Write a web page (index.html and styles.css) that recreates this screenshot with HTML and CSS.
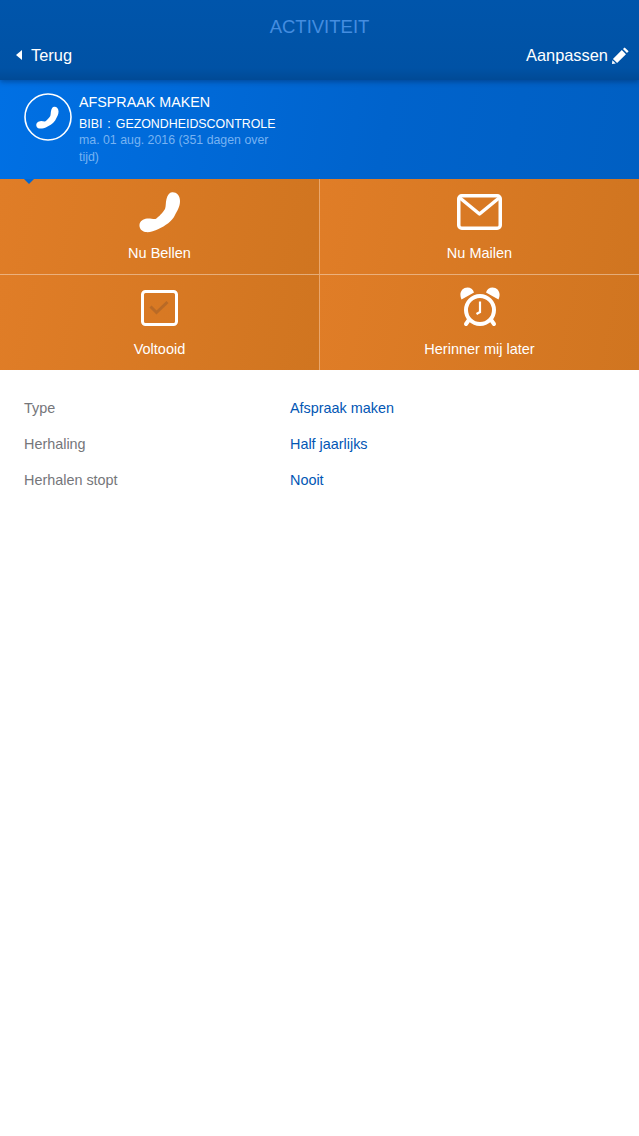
FILE: index.html
```html
<!DOCTYPE html>
<html lang="nl">
<head>
<meta charset="utf-8">
<title>Activiteit</title>
<link rel="stylesheet" href="styles.css">
</head>
<body>
<header class="nav">
  <h1 class="nav-title">ACTIVITEIT</h1>
  <div class="nav-row">
    <a class="nav-link"><svg class="back-icon" viewBox="0 0 6 10"><path d="M6 0V10L0 5Z"/></svg>Terug</a>
    <a class="nav-link">Aanpassen<svg class="edit-icon" viewBox="0 0 18 18"><path d="M13.400 .4 17.600 4.600 15.800 6.400 11.600 2.200ZM10.400 3.200 14.800 7.600 5.400 17 1 12.600ZM.4 14 4 17.600 0 18Z"/></svg></a>
  </div>
</header>
<section class="summary">
  <svg class="summary-icon" viewBox="0 0 48 48"><circle class="ring-thin" cx="24" cy="24" r="23"/><path class="fill" transform="translate(12 13) scale(.55)" d="M33 1.300C37 .8 41 4 41 10 41 16 38 20 36 24 33.500 30 26 35 19.500 38 15 40.500 10 41.500 6.500 41 2.500 40.500 0 37 .5 33.500 1 30 4 28 8 27.500 11 27 14.500 28.500 16.500 28 19.500 26 24 21.500 26 18 27 15 26.500 12 27.500 8 28.500 4 30.500 1.600 33 1.300Z"/></svg>
  <div class="summary-text">
    <div class="summary-title">AFSPRAAK MAKEN</div>
    <div class="summary-sub">BIBI : GEZONDHEIDSCONTROLE</div>
    <div class="summary-date">ma. 01 aug. 2016 (351 dagen over tijd)</div>
  </div>
</section>
<section class="actions">
  <div class="pointer"></div>
  <div class="action">
    <div class="action-art"><svg class="icon-phone" viewBox="0 0 42 42"><path class="fill" d="M33 1.300C37 .8 41 4 41 10 41 16 38 20 36 24 33.500 30 26 35 19.500 38 15 40.500 10 41.500 6.500 41 2.500 40.500 0 37 .5 33.500 1 30 4 28 8 27.500 11 27 14.500 28.500 16.500 28 19.500 26 24 21.500 26 18 27 15 26.500 12 27.500 8 28.500 4 30.500 1.600 33 1.300Z"/></svg></div>
    <span class="action-label">Nu Bellen</span>
  </div>
  <div class="action">
    <div class="action-art"><svg class="icon-mail" viewBox="0 0 45 36"><rect class="line" x="1.750" y="1.750" width="41.500" height="32.500" rx="3"/><path class="line" d="M3 4 22.500 20 42 4"/></svg></div>
    <span class="action-label">Nu Mailen</span>
  </div>
  <div class="action">
    <div class="action-art"><svg class="icon-check" viewBox="0 0 37 36"><rect class="line thin" x="1.500" y="1.500" width="34" height="33" rx="3"/><path class="check" d="M9.500 16.500 15.500 22.500 26.500 12"/></svg></div>
    <span class="action-label">Voltooid</span>
  </div>
  <div class="action">
    <div class="action-art"><svg class="icon-alarm" viewBox="0 0 42 42"><path class="fill" d="M2.500 12.500C-.5 6 3 .5 8.500 .5 11.500 .5 14 2 15 5.500ZM39.500 12.500C42.500 6 39 .5 33.500 .5 30.500 .5 28 2 27 5.500Z"/><circle class="line ring" cx="21" cy="23" r="14"/><path class="foot" d="M9.500 33.500 7 37M32.500 33.500 35 37"/><path class="hands" d="M21 14.500V25L17.500 27"/></svg></div>
    <span class="action-label">Herinner mij later</span>
  </div>
</section>
<dl class="details">
  <div class="detail"><dt>Type</dt><dd>Afspraak maken</dd></div>
  <div class="detail"><dt>Herhaling</dt><dd>Half jaarlijks</dd></div>
  <div class="detail"><dt>Herhalen stopt</dt><dd>Nooit</dd></div>
</dl>
</body>
</html>
```
FILE: styles.css
```css
* { box-sizing: border-box; }
html, body { margin: 0; padding: 0; }
body {
  width: 639px;
  min-height: 1136px;
  background: #fff;
  font-family: "Liberation Sans", Arial, sans-serif;
  overflow: hidden;
}
.nav {
  height: 80px;
  background: linear-gradient(180deg, #0055ab 0%, #0052a5 85%, #004a96 100%);
  padding-top: 16px;
  color: #fff;
  box-shadow: 0 2px 5px rgba(0, 40, 90, .45);
  position: relative;
  z-index: 1;
}
.nav-title {
  margin: 0;
  height: 22px;
  line-height: 22px;
  font-size: 18.500px;
  font-weight: 400;
  text-align: center;
  color: #448de0;
}
.nav-row {
  display: flex;
  justify-content: space-between;
  align-items: center;
  margin-top: 6px;
  padding: 0 10px 0 16px;
}
.nav-link {
  display: flex;
  align-items: center;
  font-size: 16.400px;
  line-height: 22px;
  color: #fff;
}
.back-icon { width: 6px; height: 10px; margin-right: 9px; fill: #fff; }
.edit-icon { width: 17px; height: 17px; margin-left: 4px; fill: #fff; }
.summary {
  height: 99px;
  background: linear-gradient(100deg, #0070e4 0%, #0063cc 60%, #005fc2 100%);
  padding: 13px 0 0 24px;
  display: flex;
  gap: 7px;
}
.summary-icon {
  width: 48px;
  height: 48px;
  flex: none;
  display: block;
}
.ring-thin { fill: none; stroke: #fff; stroke-width: 1.600; }
.fill { fill: #fff; }
.summary-text { width: 200px; color: #fff; }
.summary-title { font-size: 14.300px; line-height: 18px; }
.summary-sub { font-size: 12.400px; line-height: 16px; margin-top: 5px; white-space: nowrap; word-spacing: 1.500px; }
.summary-date { font-size: 12.350px; line-height: 17px; color: #77b3f2; }
.actions {
  position: relative;
  display: grid;
  grid-template-columns: 320px 319px;
  grid-template-rows: 96px 95px;
  height: 191px;
}
.pointer {
  position: absolute;
  left: 24px;
  top: 0;
  width: 10px;
  height: 5px;
  background: #0067d4;
  clip-path: polygon(0 0, 100% 0, 50% 100%);
  z-index: 1;
}
.action {
  display: flex;
  flex-direction: column;
  align-items: center;
  color: #fff;
  padding-top: 12px;
  background: linear-gradient(100deg, #e07d27 0%, #d07520 100%);
}
.action:nth-child(2), .action:nth-child(4) { border-right: 1px solid rgba(255, 255, 255, .32); }
.action:nth-child(2), .action:nth-child(3) { border-bottom: 1px solid rgba(255, 255, 255, .4); }
.action-art {
  height: 42px;
  display: flex;
  align-items: center;
  justify-content: center;
}
.action-art svg { display: block; }
.icon-phone { width: 42px; height: 42px; }
.icon-mail { width: 45px; height: 36px; }
.icon-check { width: 37px; height: 36px; }
.icon-alarm { width: 42px; height: 42px; }
.action-label { font-size: 14.500px; line-height: 18px; margin-top: 11px; }
.line { fill: none; stroke: #fff; stroke-width: 3.500; stroke-linejoin: round; }
.line.thin { stroke-width: 3; }
.line.ring { stroke-width: 4; }
.check { fill: none; stroke: #b96a26; stroke-width: 3; }
.hands { fill: none; stroke: #fff; stroke-width: 2.200; }
.foot { fill: none; stroke: #fff; stroke-width: 4; stroke-linecap: round; }
.details { margin: 0; padding: 20px 0 0 24px; }
.detail { display: flex; height: 36px; align-items: center; margin: 0; }
.detail dt { width: 266px; font-size: 14.400px; color: #75767a; }
.detail dd { margin: 0; font-size: 14.400px; color: #0256b4; }
```
